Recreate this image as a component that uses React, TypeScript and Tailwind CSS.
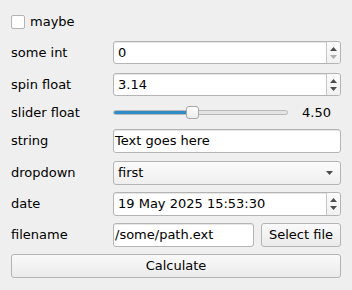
import type { ReactNode } from "react";

const FONT = { fontFamily: '"DejaVu Sans", Verdana, sans-serif' };

function Up({ disabled }: { disabled?: boolean }) {
  return (
    <svg width="7" height="4" viewBox="0 0 7 4" className="block">
      <polygon points="0,4 3.5,0 7,4" fill={disabled ? "#adadad" : "#4d4d4d"} />
    </svg>
  );
}

function Down({ disabled }: { disabled?: boolean }) {
  return (
    <svg width="7" height="4" viewBox="0 0 7 4" className="block">
      <polygon points="0,0 7,0 3.5,4" fill={disabled ? "#adadad" : "#4d4d4d"} />
    </svg>
  );
}

function Row({ label, children, className = "" }: { label: string; children: ReactNode; className?: string }) {
  return (
    <div className={`flex items-center ${className}`}>
      <div className="w-[102px] shrink-0 text-[13px] text-black">{label}</div>
      <div className="flex-1 min-w-0">{children}</div>
    </div>
  );
}

function SpinBox({ value, downDisabled }: { value: string; downDisabled?: boolean }) {
  return (
    <div className="flex h-[23px] rounded-[3px] border border-[#b4b4b4] bg-white shadow-[inset_0_1px_0_#e6e6e6]">
      <div className="flex-1 pl-[4px] flex items-center text-[13px] text-black">{value}</div>
      <div className="w-[14px] border-l border-[#c6c6c6] flex flex-col items-center justify-center gap-[4px] bg-gradient-to-b from-[#fbfbfb] to-[#f1f1f1] rounded-r-[3px]">
        <Up />
        <Down disabled={downDisabled} />
      </div>
    </div>
  );
}

function LineEdit({ value, className = "" }: { value: string; className?: string }) {
  return (
    <div className={`h-[24px] rounded-[3px] border border-[#b4b4b4] bg-white shadow-[inset_0_1px_0_#e6e6e6] pl-[1px] flex items-center text-[13px] text-black ${className}`}>
      {value}
    </div>
  );
}

function Button({ children, className = "" }: { children: ReactNode; className?: string }) {
  return (
    <div className={`h-[24px] rounded-[3px] border border-[#b4b4b4] bg-gradient-to-b from-[#f9f9f9] to-[#ebebeb] flex items-center justify-center text-[13px] text-black ${className}`}>
      {children}
    </div>
  );
}

export default function App() {
  return (
    <div style={FONT} className="w-[352px] h-[290px] bg-[#efefef] px-[11px] pt-[10px] flex flex-col">
      {/* Checkbox */}
      <div className="flex items-center h-[23px]">
        <div className="w-[14px] h-[14px] rounded-[2px] border border-[#b4b4b4] bg-white" />
        <span className="ml-[5px] text-[13px] text-black">maybe</span>
      </div>

      <Row label="some int" className="mt-[8px]">
        <SpinBox value="0" downDisabled />
      </Row>

      <Row label="spin float" className="mt-[9px]">
        <SpinBox value="3.14" />
      </Row>

      {/* Slider */}
      <Row label="slider float" className="mt-[9px] h-[15px]">
        <div className="flex items-center">
          <div className="relative w-[175px] h-[15px] flex items-center">
            <div className="w-full h-[5px] rounded-[3px] border border-[#b9b9b9] bg-[#e4e4e4] overflow-hidden flex">
              <div className="w-[76px] h-full bg-[#308cc6] border-r border-[#2a7ab0]" />
            </div>
            <div className="absolute left-[73px] top-[1px] w-[13px] h-[13px] rounded-[3px] border border-[#a8a8a8] bg-gradient-to-b from-[#fdfdfd] to-[#ececec]" />
          </div>
          <div className="ml-auto pr-[10px] text-[13px] text-black">4.50</div>
        </div>
      </Row>

      <Row label="string" className="mt-[9px]">
        <LineEdit value="Text goes here" />
      </Row>

      {/* Dropdown */}
      <Row label="dropdown" className="mt-[8px]">
        <div className="h-[24px] rounded-[3px] border border-[#b4b4b4] bg-gradient-to-b from-[#fbfbfb] to-[#efefef] pl-[4px] pr-[7px] flex items-center text-[13px] text-black">
          <span className="flex-1">first</span>
          <Down />
        </div>
      </Row>

      <Row label="date" className="mt-[7px]">
        <div className="h-[24px]">
          <div className="flex h-[24px] rounded-[3px] border border-[#b4b4b4] bg-white shadow-[inset_0_1px_0_#e6e6e6]">
            <div className="flex-1 pl-[4px] flex items-center text-[13px] text-black">19 May 2025 15:53:30</div>
            <div className="w-[14px] border-l border-[#c6c6c6] flex flex-col items-center justify-center gap-[4px] bg-gradient-to-b from-[#fbfbfb] to-[#f1f1f1] rounded-r-[3px]">
              <Up />
              <Down />
            </div>
          </div>
        </div>
      </Row>

      <Row label="filename" className="mt-[7px]">
        <div className="flex gap-[7px]">
          <LineEdit value="/some/path.ext" className="flex-1" />
          <Button className="w-[80px]">Select file</Button>
        </div>
      </Row>

      <Button className="mt-[7px]">Calculate</Button>
    </div>
  );
}
